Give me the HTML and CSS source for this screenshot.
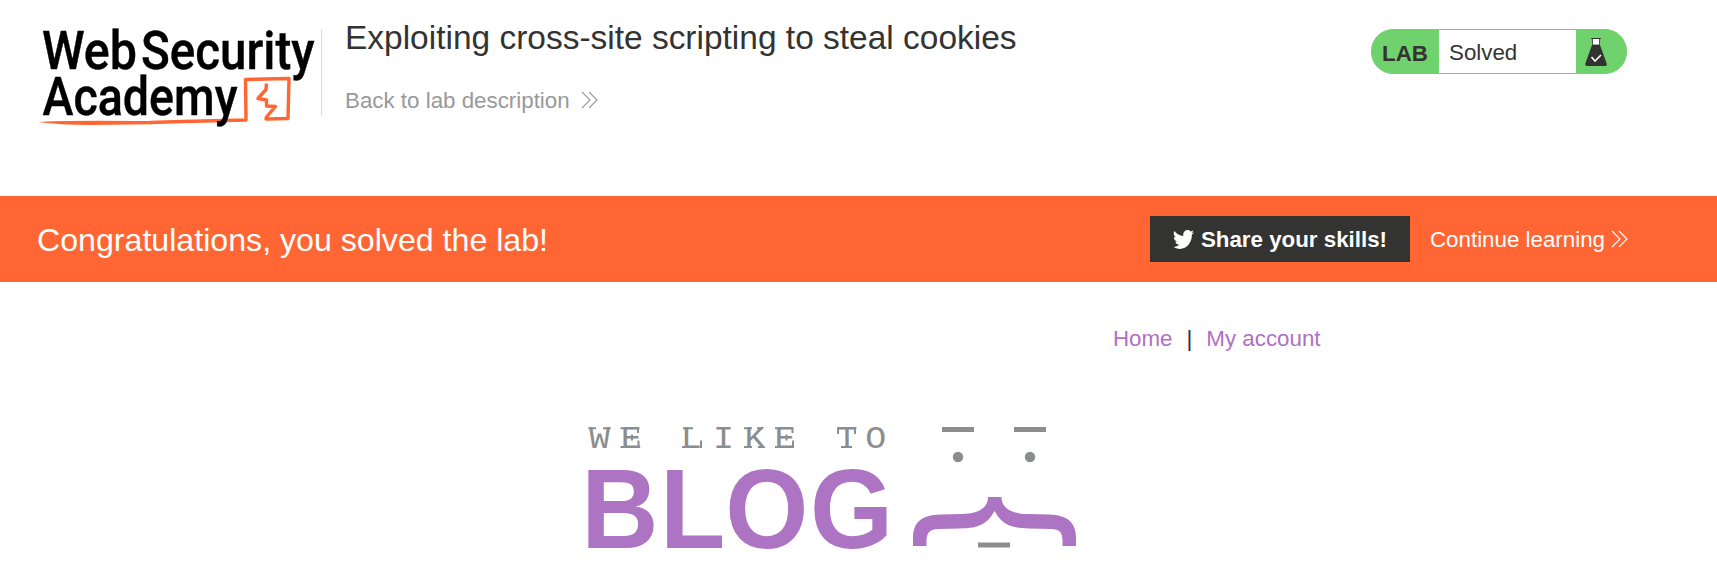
FILE: index.html
```html
<!DOCTYPE html>
<html lang="en">
<head>
<meta charset="utf-8">
<title>Exploiting cross-site scripting to steal cookies</title>
<link rel="stylesheet" href="styles.css">
</head>
<body>
<header class="lab-header">
  <svg class="academy-logo" width="284" height="104" viewBox="36 26 284 104" role="img" aria-label="Web Security Academy">
    <path class="sketch" d="M150 122.500L182 121.500L246 120L245.500 79.500L289 78.500L288 118.500L266 119L266.500 117L275.500 106.500L266.500 106V100L258 98.500L266 89.500L266.500 83.500"/>
    <path class="stroke-end" d="M38 122Q60 120 152 121L152 124.200L90 125Q60 125 38 122Z"/>
    <text class="logo-word" x="42.500" y="114.500" textLength="195" lengthAdjust="spacingAndGlyphs">Academy</text>
    <text class="logo-word" x="42" y="69.300" textLength="95" lengthAdjust="spacingAndGlyphs">Web</text>
    <text class="logo-word" x="141" y="69.300" textLength="173.500" lengthAdjust="spacingAndGlyphs">Security</text>
  </svg>
  <div class="title-block">
    <h1 class="title">Exploiting cross-site scripting to steal cookies</h1>
    <a class="back-link">Back to lab description
      <svg class="chevrons" width="17" height="18" viewBox="0 0 17 18"><path d="M1 1L9 9L1 17M8 1L16 9L8 17"/></svg>
    </a>
  </div>
  <div class="lab-status">
    <span class="lab-label">LAB</span>
    <span class="lab-state">Solved</span>
    <svg class="flask" width="24" height="30" viewBox="0 0 24 30">
      <path fill="#333332" d="M8 8H16L22.500 26Q23.500 29 21 29H3Q0.500 29 1.500 26Z"/>
      <path fill="#fff" stroke="#333332" stroke-width=".8" d="M8.500 1.500H15.500V8H8.500Z"/>
      <path stroke="#333332" stroke-width="1.200" d="M7 1.500H17"/>
      <path fill="none" stroke="#fff" stroke-width="1.600" d="M7.500 20L11 24L17 18"/>
    </svg>
  </div>
</header>
<section class="banner">
  <p class="congrats">Congratulations, you solved the lab!</p>
  <a class="share">
    <svg width="21" height="19" viewBox="0 2 16 13" preserveAspectRatio="none"><path fill="#fff" d="M5.026 15c6.038 0 9.341-5.003 9.341-9.334 0-.14 0-.282-.006-.422A6.685 6.685 0 0 0 16 3.542a6.658 6.658 0 0 1-1.889.518 3.301 3.301 0 0 0 1.447-1.817 6.533 6.533 0 0 1-2.087.793A3.286 3.286 0 0 0 7.875 6.030a9.325 9.325 0 0 1-6.767-3.429 3.289 3.289 0 0 0 1.018 4.382A3.323 3.323 0 0 1 .64 6.575v.045a3.288 3.288 0 0 0 2.632 3.218 3.203 3.203 0 0 1-.865.115 3.230 3.230 0 0 1-.614-.057 3.283 3.283 0 0 0 3.067 2.277A6.588 6.588 0 0 1 .78 13.580a6.320 6.320 0 0 1-.78-.045A9.344 9.344 0 0 0 5.026 15z"/></svg>
    <span>Share your skills!</span>
  </a>
  <a class="continue"><span>Continue learning</span>
    <svg class="chevrons" width="17" height="18" viewBox="0 0 17 18"><path d="M1 1L9 9L1 17M8 1L16 9L8 17"/></svg>
  </a>
</section>
<main class="page">
  <nav class="nav"><a>Home</a><span class="separator">|</span><a>My account</a></nav>
  <svg class="blog-logo" width="500" height="150" viewBox="580 415 500 150" role="img" aria-label="We like to blog">
    <text class="tagline" transform="scale(1.15 1)" x="512.200 539.800 564 592 620 647.300 673.500 699 727.300 752.500" y="448">WE LIKE TO</text>
    <path class="serifs" d="M588.500 428.300H596M603 428.300H610.500M620.500 428.300H626M620.500 447H626M638 427.500V433M638.500 440.500V448M632 434.500V440.500M682 447H688M683 428.300H693M701 440.500V448M744 428.300H752M744 447H752M757 428.300H763M758 447H764M775 428.300H781M775 447H781M792.500 427.500V433M793 440.500V448M786.500 434.500V440.500M838 427.500V434M855 427.500V434M841 447H852"/>
    <text class="blog-word" transform="scale(.95 1)" x="611.800 694.800 763.300 852.700" y="547.700">BLOG</text>
    <g fill="#8c8d8e">
      <path d="M942 427H974V432H942ZM1014 427H1046V432H1014ZM978 542.500H1010V547.500H978Z"/>
      <circle cx="958" cy="457" r="5.200"/><circle cx="1030" cy="457" r="5.200"/>
    </g>
    <path fill="#ad74c3" d="M913 546V538C913 522 922 515 940 514.500L962 514C980 513.500 988 507 988 497H1001.500C1001.500 507 1009.500 513.500 1027 514L1049 514.500C1067 515 1076 522 1076 538V546H1062.500V541C1062.500 533 1060 529 1051 529L1029 528.500C1009 528 1002 524 994.500 511C987 524 980 528 960 528.500L938 529C930 529 926.500 533 926.500 541V546Z"/>
  </svg>
</main>
</body>
</html>
```
FILE: styles.css
```css
body {
  margin: 0;
  background: #fff;
  color: #333332;
  font-family: "Liberation Sans", Arial, sans-serif;
  font-size: 22.33px;
  line-height: 26px;
}

.lab-header {
  display: flex;
  align-items: flex-start;
  box-sizing: border-box;
  height: 196px;
  padding: 26px 90px 0 36px;
}

.academy-logo {
  flex: none;
  overflow: visible;
  fill: #000;
  font-family: Roboto, sans-serif;
  font-size: 53px;
  font-weight: 500;
}

.logo-word {
  stroke: #000;
  stroke-width: 0.4px;
}

.sketch {
  fill: none;
  stroke: #ff6633;
  stroke-width: 3.4px;
  stroke-linejoin: round;
}

.stroke-end {
  fill: #ff6633;
}

.title-block {
  box-sizing: border-box;
  height: 87px;
  margin: 3px auto 0 1px;
  padding-left: 23px;
  border-left: 1px solid #ddd;
}

.title {
  margin: -11px 0 0;
  font-size: 33.47px;
  font-weight: 400;
  line-height: 40px;
}

.back-link {
  display: flex;
  align-items: center;
  gap: 11px;
  margin-top: 30px;
  color: #999;
}

.chevrons {
  fill: none;
  stroke: currentColor;
  stroke-width: 1.1px;
}

.back-link .chevrons {
  margin-bottom: 2px;
}

.lab-status {
  display: flex;
  align-items: center;
  box-sizing: border-box;
  width: 256px;
  height: 45px;
  margin-top: 3px;
  overflow: hidden;
  border: 1px solid #6fd26c;
  border-radius: 22px;
  background: #6fd26c;
}

.lab-label {
  width: 57px;
  padding: 5px 0 0 10px;
  font-weight: 700;
}

.lab-state {
  box-sizing: border-box;
  width: 137px;
  height: 43px;
  padding-left: 10px;
  background: #fff;
  line-height: 46px;
}

.flask {
  margin-left: 8px;
}

.banner {
  display: flex;
  align-items: center;
  box-sizing: border-box;
  height: 86px;
  padding: 0 89px 0 37px;
  background: #ff6633;
  color: #fff;
}

.congrats {
  margin: 2px auto 0 0;
  font-size: 32.15px;
  line-height: 40px;
}

.share {
  display: flex;
  align-items: center;
  justify-content: center;
  gap: 7px;
  box-sizing: border-box;
  width: 260px;
  height: 46px;
  margin-right: 20px;
  background: #333332;
  font-weight: 700;
}

.share span,
.continue span {
  padding-top: 2px;
}

.continue {
  display: flex;
  align-items: center;
  gap: 6px;
}

.page {
  display: flex;
  flex-direction: column;
  align-items: center;
}

.nav {
  display: flex;
  box-sizing: border-box;
  width: 924px;
  justify-content: flex-end;
  margin-top: 44px;
  color: #b070c4;
}

.separator {
  margin: 0 14px;
  color: #1d3446;
}

.blog-logo {
  margin: 63px 57px 0 0;
  overflow: visible;
}

.tagline {
  fill: #8c8d8e;
  font-family: "Liberation Mono", monospace;
  font-size: 30.5px;
}

.serifs {
  fill: none;
  stroke: #8c8d8e;
  stroke-width: 2px;
}

.blog-word {
  fill: #ad74c3;
  font-size: 112.5px;
  font-weight: 700;
}
```
